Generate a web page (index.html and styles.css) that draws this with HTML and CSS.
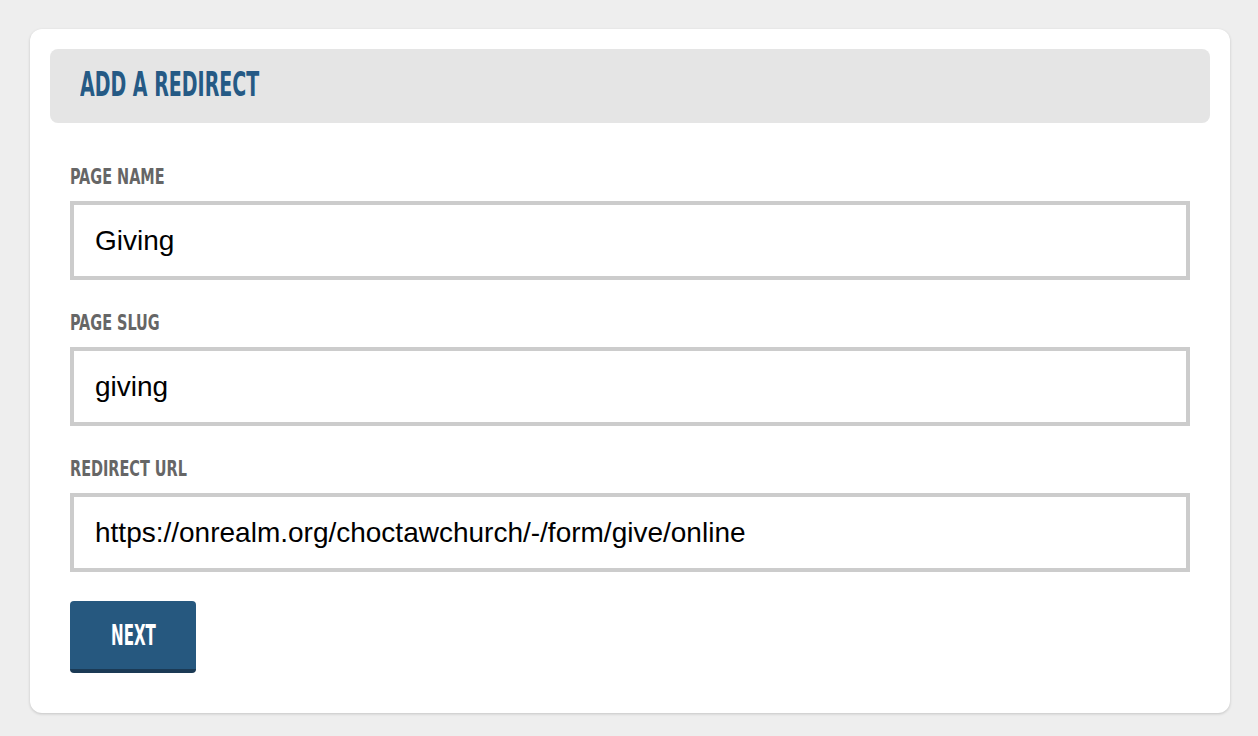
FILE: index.html
```html
<!DOCTYPE html>
<html>
<head>
<meta charset="utf-8">
<link rel="stylesheet" href="styles.css">
</head>
<body>
<div class="card">
  <div class="card-header"><h1 class="title"><span class="squish">ADD A REDIRECT</span></h1></div>
  <form class="form">
    <label class="label"><span class="squish">PAGE NAME</span></label>
    <div class="input">Giving</div>
    <label class="label"><span class="squish">PAGE SLUG</span></label>
    <div class="input">giving</div>
    <label class="label"><span class="squish">REDIRECT URL</span></label>
    <div class="input">https://onrealm.org/choctawchurch/-/form/give/online</div>
    <div class="actions"><button type="button" class="btn"><span class="squish">NEXT</span></button></div>
  </form>
</div>
</body>
</html>
```
FILE: styles.css
```css
html, body { margin: 0; padding: 0; }
body {
  background: #eeeeee;
  font-family: "Liberation Sans", Arial, sans-serif;
  padding: 29px 28px 24px 30px;
}
.card {
  background: #ffffff;
  border-radius: 12px;
  box-shadow: 0 1px 3px rgba(0,0,0,0.18);
  padding: 20px 20px 40px;
  width: 1200px;
  box-sizing: border-box;
}
.card-header {
  background: #e5e5e5;
  border-radius: 8px;
  height: 74px;
  display: flex;
  align-items: center;
  padding-left: 30px;
}
.squish {
  display: inline-block;
  font-family: "DejaVu Sans Condensed", "DejaVu Sans", sans-serif;
  font-weight: bold;
  transform: scaleX(0.64);
  transform-origin: left center;
  white-space: nowrap;
}
.title {
  margin: 0;
  font-size: 33px;
  line-height: 33px;
  color: #255a85;
  font-weight: bold;
  position: relative;
  top: -2px;
}
.form {
  padding: 0 20px;
  display: flex;
  flex-direction: column;
}
.label {
  display: block;
  color: #666666;
  font-size: 22px;
  line-height: 22px;
  margin-top: 32px;
  margin-bottom: 13px;
}
.label .squish { transform: scaleX(0.73); }
.form .label:first-child { margin-top: 43px; }
.input {
  height: 79px;
  box-sizing: border-box;
  border: 4px solid #cccccc;
  padding: 0 21px;
  display: flex;
  align-items: center;
  font-size: 28px;
  color: #000;
}
.actions { margin-top: 29px; }
.btn {
  width: 126px;
  height: 72px;
  background: #26587f;
  border: 0;
  border-bottom: 4px solid #1b3a55;
  border-radius: 4px;
  color: #ffffff;
  font-size: 28px;
  padding: 0;
  display: flex;
  align-items: center;
  justify-content: center;
}
.btn .squish { transform: scaleX(0.6); transform-origin: center center; }
```
